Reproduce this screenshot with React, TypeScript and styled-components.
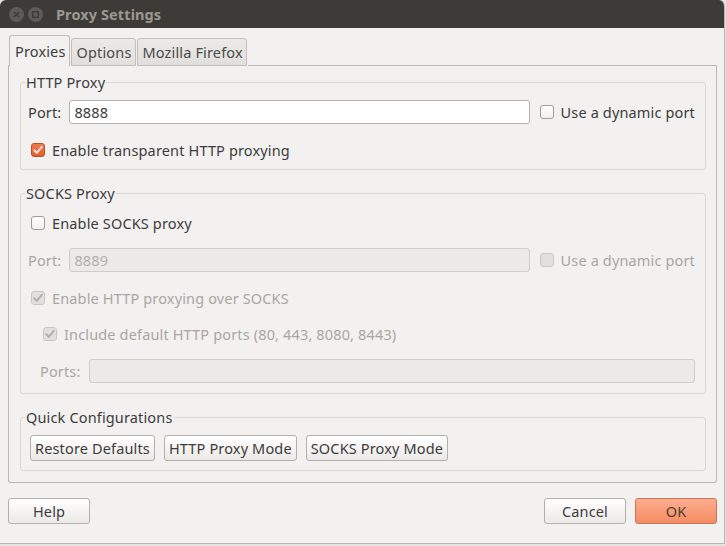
import styled, { createGlobalStyle, css } from 'styled-components';

const GlobalStyle = createGlobalStyle`
  html, body {
    margin: 0;
    padding: 0;
    background: #e4e3e1;
  }
  body {
    font-family: "Noto Sans", "Open Sans", sans-serif;
    font-size: 14.5px;
    letter-spacing: 0.15px;
    line-height: 18px;
    color: #3c3c3c;
  }
`;

const Window = styled.div`
  width: 725px;
  height: 544px;
  box-sizing: border-box;
  background: #f2f1f0;
  border-right: 1px solid #b8b6b2;
  border-bottom: 1px solid #b8b6b2;
  border-radius: 6px 6px 0 0;
  overflow: hidden;
  display: flex;
  flex-direction: column;
`;

const TitleBar = styled.div`
  height: 28px;
  flex: none;
  background: #3c3b37;
  display: flex;
  align-items: center;
  padding-left: 9px;
  gap: 4px;
`;

const TitleButton = styled.div`
  width: 15px;
  height: 15px;
  border-radius: 50%;
  background: #5c5b57;
  display: flex;
  align-items: center;
  justify-content: center;
`;

const Title = styled.div`
  margin-left: 9px;
  font-weight: bold;
  font-size: 14.5px;
  letter-spacing: 0.1px;
  color: #9b9892;
`;

const Body = styled.div`
  flex: 1;
  padding: 7px 7px 0 8px;
  display: flex;
  flex-direction: column;
`;

const TabStrip = styled.div`
  display: flex;
  align-items: flex-end;
  height: 31px;
`;

const TabGap = styled.div<{ $grow?: boolean }>`
  width: 1px;
  height: 1px;
  background: #bcb9b4;
  ${({ $grow }) => $grow && css`flex: 1;`}
`;

const Tab = styled.div<{ $active?: boolean }>`
  box-sizing: border-box;
  height: 28px;
  padding: 0 3px 0 5px;
  display: flex;
  align-items: center;
  border: 1px solid #c2bfba;
  border-radius: 3px 3px 0 0;
  background: linear-gradient(#eceae7, #e1dfdc);
  color: #4a4a4a;
  margin-right: 1px;
  ${({ $active }) => $active && css`
    height: 31px;
    border-bottom: none;
    background: #f2f1f0;
    color: #3c3c3c;
    padding-bottom: 1px;
  `}
`;

const Panel = styled.div`
  box-sizing: border-box;
  width: 709px;
  height: 417px;
  border: 1px solid #bcb9b4;
  border-top: none;
  border-radius: 0 0 3px 3px;
  padding: 7px 10px 0 11px;
  display: flex;
  flex-direction: column;
  gap: 14px;
`;

const Frame = styled.fieldset<{ $bottom: number }>`
  margin: 0;
  padding: 0 0 ${({ $bottom }) => $bottom}px 0;
  border: 1px solid #d9d7d3;
  border-radius: 3px;
  display: flex;
  flex-direction: column;
`;

const Legend = styled.legend`
  margin-left: 4px;
  padding: 0 1px;
  line-height: 18px;
  color: #3c3c3c;
`;

const Row = styled.div<{ $top: number; $indent: number }>`
  display: flex;
  align-items: center;
  margin-top: ${({ $top }) => $top}px;
  padding-left: ${({ $indent }) => $indent}px;
  padding-right: 10px;
  height: 18px;
  &:has(> div) {
    height: 24px;
  }
`;

const FieldLabel = styled.span<{ $disabled?: boolean }>`
  margin-right: 8px;
  color: ${({ $disabled }) => ($disabled ? '#aaa6a2' : '#3c3c3c')};
`;

const Input = styled.div<{ $disabled?: boolean }>`
  flex: 1;
  box-sizing: border-box;
  height: 24px;
  border: 1px solid #b6b3ae;
  border-radius: 3px;
  background: #fff;
  padding: 0 4px;
  display: flex;
  align-items: center;
  color: #3c3c3c;
  ${({ $disabled }) => $disabled && css`
    background: #ebeae8;
    border-color: #d0cdc9;
    color: #b4b0ac;
  `}
`;

const Box = styled.span<{ $checked?: boolean; $disabled?: boolean }>`
  box-sizing: border-box;
  width: 14px;
  height: 14px;
  flex: none;
  border-radius: 3px;
  border: 1px solid #a19d98;
  background: linear-gradient(#ffffff, #f1f0ee);
  display: flex;
  align-items: center;
  justify-content: center;
  ${({ $checked }) => $checked && css`
    border-color: #b3502d;
    background: linear-gradient(#f07a4e, #e2602f);
  `}
  ${({ $disabled }) => $disabled && css`
    border-color: #cac7c3;
    background: #e2e0dd;
  `}
`;

const CheckText = styled.span<{ $disabled?: boolean }>`
  margin-left: 7px;
  color: ${({ $disabled }) => ($disabled ? '#aaa6a2' : '#3c3c3c')};
  white-space: nowrap;
`;

const Aside = styled.span`
  display: flex;
  align-items: center;
  margin-left: 10px;
`;

const ButtonRow = styled.div`
  display: flex;
  gap: 9px;
  margin-top: 9px;
  padding-left: 9px;
`;

const Button = styled.button<{ $width?: number; $primary?: boolean }>`
  box-sizing: border-box;
  height: 26px;
  padding: 0 4px;
  ${({ $width }) => $width && css`width: ${$width}px;`}
  font-family: inherit;
  font-size: 14.5px;
  letter-spacing: 0.15px;
  color: #3c3c3c;
  border: 1px solid #b3afa9;
  border-radius: 3px;
  background: linear-gradient(#ffffff, #ebe9e6);
  ${({ $primary }) => $primary && css`
    border-color: #c4755a;
    background: linear-gradient(#fcad90, #f58c63);
    color: #4f3c33;
  `}
`;

const Footer = styled.div`
  display: flex;
  align-items: center;
  margin-top: 15px;
  gap: 9px;
`;

const Spacer = styled.div`
  flex: 1;
`;

function Check({ checked, disabled, label }: { checked?: boolean; disabled?: boolean; label: string }) {
  return (
    <>
      <Box $checked={checked} $disabled={disabled}>
        {checked && (
          <svg width="12" height="12" viewBox="0 0 12 12">
            <path
              d="M2.2 6.2 L4.8 8.8 L9.8 2.8"
              fill="none"
              stroke={disabled ? '#b3afaa' : '#fbe3d8'}
              strokeWidth="2"
              strokeLinecap="round"
              strokeLinejoin="round"
            />
          </svg>
        )}
      </Box>
      <CheckText $disabled={disabled}>{label}</CheckText>
    </>
  );
}

export default function App() {
  return (
    <>
      <GlobalStyle />
      <Window>
        <TitleBar>
          <TitleButton>
            <svg width="7" height="7" viewBox="0 0 7 7">
              <path d="M1 1 L6 6 M6 1 L1 6" stroke="#3c3b37" strokeWidth="1.4" />
            </svg>
          </TitleButton>
          <TitleButton>
            <svg width="7" height="7" viewBox="0 0 7 7">
              <rect x="0.7" y="0.7" width="5.6" height="5.6" fill="none" stroke="#3c3b37" strokeWidth="1.4" />
            </svg>
          </TitleButton>
          <Title>Proxy Settings</Title>
        </TitleBar>
        <Body>
          <TabStrip>
            <TabGap />
            <Tab $active>Proxies</Tab>
            <Tab>Options</Tab>
            <Tab>Mozilla Firefox</Tab>
            <TabGap $grow />
          </TabStrip>
          <Panel>
            <Frame $bottom={10}>
              <Legend>HTTP Proxy</Legend>
              <Row $top={9} $indent={7}>
                <FieldLabel>Port:</FieldLabel>
                <Input>8888</Input>
                <Aside>
                  <Check label="Use a dynamic port" />
                </Aside>
              </Row>
              <Row $top={17} $indent={10}>
                <Check checked label="Enable transparent HTTP proxying" />
              </Row>
            </Frame>
            <Frame $bottom={10}>
              <Legend>SOCKS Proxy</Legend>
              <Row $top={12} $indent={10}>
                <Check label="Enable SOCKS proxy" />
              </Row>
              <Row $top={16} $indent={7}>
                <FieldLabel $disabled>Port:</FieldLabel>
                <Input $disabled>8889</Input>
                <Aside>
                  <Check disabled label="Use a dynamic port" />
                </Aside>
              </Row>
              <Row $top={17} $indent={10}>
                <Check checked disabled label="Enable HTTP proxying over SOCKS" />
              </Row>
              <Row $top={18} $indent={22}>
                <Check checked disabled label="Include default HTTP ports (80, 443, 8080, 8443)" />
              </Row>
              <Row $top={16} $indent={19}>
                <FieldLabel $disabled>Ports:</FieldLabel>
                <Input $disabled />
              </Row>
            </Frame>
            <Frame $bottom={9}>
              <Legend>Quick Configurations</Legend>
              <ButtonRow>
                <Button>Restore Defaults</Button>
                <Button>HTTP Proxy Mode</Button>
                <Button>SOCKS Proxy Mode</Button>
              </ButtonRow>
            </Frame>
          </Panel>
          <Footer>
            <Button $width={82}>Help</Button>
            <Spacer />
            <Button $width={82}>Cancel</Button>
            <Button $width={82} $primary>OK</Button>
          </Footer>
        </Body>
      </Window>
    </>
  );
}
